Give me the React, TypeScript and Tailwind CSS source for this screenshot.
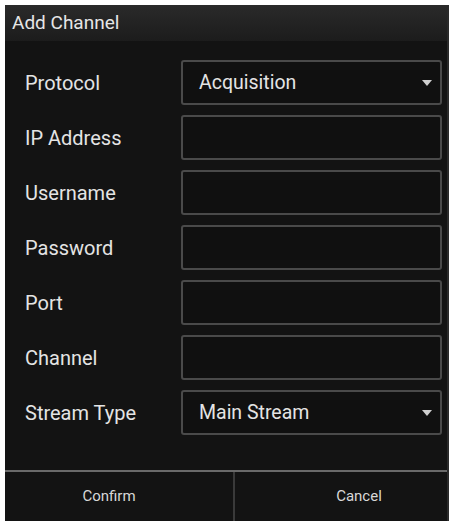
const rows: { label: string; value?: string; select?: boolean }[] = [
  { label: "Protocol", value: "Acquisition", select: true },
  { label: "IP Address" },
  { label: "Username" },
  { label: "Password" },
  { label: "Port" },
  { label: "Channel" },
  { label: "Stream Type", value: "Main Stream", select: true },
];

function Caret() {
  return (
    <svg width="10" height="6" viewBox="0 0 10 6" className="mr-[8px]">
      <path d="M0 0h10L5 6z" fill="#d0d0d0" />
    </svg>
  );
}

export default function App() {
  return (
    <div
      className="w-[451px] h-[523px] bg-white pt-[5px] pl-[5px]"
      style={{ fontFamily: "Roboto, 'Liberation Sans', sans-serif" }}
    >
      <div className="w-[444px] h-[516px] bg-[#131313] flex flex-col border-r-2 border-[#2a2a2a]">
        {/* Title bar */}
        <div className="h-[36px] flex items-center pl-[7px] bg-gradient-to-b from-[#2a2a2a] to-[#1c1c1c] text-[19px] text-[#e6e6e6]">
          Add Channel
        </div>

        {/* Form */}
        <div className="flex-1 flex flex-col gap-[10px] pt-[19px] pr-[5px]">
          {rows.map((r) => (
            <div key={r.label} className="flex items-center h-[45px]">
              <div className="w-[176px] pl-[20px] text-[20px] text-[#e4e4e4]">{r.label}</div>
              <div className="flex-1 h-full flex items-center justify-between rounded-[3px] border-2 border-[#4a4a4a] bg-[#101010] pl-[16px]">
                <span className="text-[19.5px] text-[#e4e4e4]">{r.value}</span>
                {r.select && <Caret />}
              </div>
            </div>
          ))}
        </div>

        {/* Buttons */}
        <div className="h-[51px] flex border-t-2 border-[#6a6a6a]">
          <button className="w-[230px] h-full pr-[20px] border-r-2 border-[#3a3a3a] text-[15px] text-[#d8d8d8]">
            Confirm
          </button>
          <button className="flex-1 h-full pl-[36px] text-[15px] text-[#d8d8d8]">Cancel</button>
        </div>
      </div>
    </div>
  );
}
